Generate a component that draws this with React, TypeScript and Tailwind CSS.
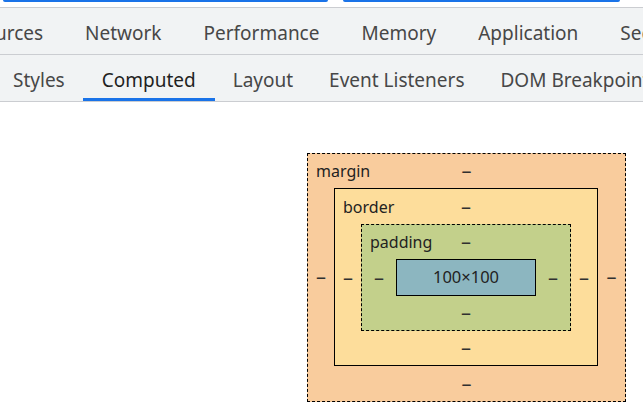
import React from 'react'

const font = { fontFamily: '"Noto Sans", "Open Sans", sans-serif' }

const topTabs = ['Sources', 'Network', 'Performance', 'Memory', 'Application', 'Security']
const subTabs = ['Styles', 'Computed', 'Layout', 'Event Listeners', 'DOM Breakpoints', 'Properties']

const Dash = ({ className = '' }: { className?: string }) => (
  <span className={`text-[20px] leading-none text-[#303030] ${className}`}>–</span>
)

const TopRow = ({ label, h, pl }: { label?: string; h: string; pl: string }) => (
  <div className={`grid grid-cols-[1fr_auto_1fr] items-center ${h}`}>
    <span className={`${pl} text-[16px] leading-none text-[#222]`}>{label}</span>
    <Dash />
    <span />
  </div>
)

const BottomRow = ({ h }: { h: string }) => (
  <div className={`flex items-center justify-center ${h}`}>
    <Dash />
  </div>
)

export default function App() {
  return (
    <div className="w-[643px] h-[418px] overflow-hidden bg-white" style={font}>
      <div className="h-[7px] flex">
        <div className="ml-[3px] w-[325px] h-[2px] rounded-b-full bg-[#1a73e8]" />
        <div className="ml-[15px] w-[277px] h-[2px] rounded-b-full bg-[#1a73e8]" />
      </div>
      <div className="h-[48px] pt-[4px] border-y border-[#cbcdd1] bg-[#f1f3f4] flex items-center whitespace-nowrap overflow-hidden">
        <div className="flex ml-[-48px]">
          {topTabs.map((t) => (
            <div key={t} className="px-[21px] text-[19px] text-[#474747]">{t}</div>
          ))}
        </div>
      </div>
      <div className="h-[47px] border-b border-[#cbcdd1] bg-[#f1f3f4] flex whitespace-nowrap overflow-hidden">
        <div className="flex ml-[-5px]">
          {subTabs.map((t) => (
            <div
              key={t}
              className={`pt-[4px] flex items-center text-[19px] ${
                t === 'Computed'
                  ? 'px-[19px] text-[#1f1f1f] shadow-[inset_0_-3px_0_#1a73e8]'
                  : 'px-[18px] text-[#474747]'
              }`}
            >
              {t}
            </div>
          ))}
        </div>
      </div>

      <div className="pt-[51px] pl-[307px]">
        <div className="w-[319px] border border-dashed border-black bg-[#f9cc9d] flex flex-col">
          <TopRow label="margin" h="h-[34px]" pl="pl-[8px]" />
          <div className="flex items-center">
            <div className="w-[26px] flex justify-center"><Dash /></div>
            <div className="w-[264px] border border-black bg-[#fddd9b] flex flex-col">
              <TopRow label="border" h="h-[35px]" pl="pl-[8px]" />
              <div className="flex items-center">
                <div className="w-[26px] flex justify-center"><Dash /></div>
                <div className="w-[210px] border border-dashed border-black bg-[#c3d08b] flex flex-col">
                  <TopRow label="padding" h="h-[34px]" pl="pl-[8px]" />
                  <div className="flex items-center">
                    <div className="w-[34px] flex justify-center"><Dash /></div>
                    <div className="w-[140px] h-[37px] border border-black bg-[#8cb6c0] flex items-center justify-center text-[16.5px] text-[#222]">
                      100×100
                    </div>
                    <div className="w-[34px] flex justify-center"><Dash /></div>
                  </div>
                  <BottomRow h="h-[34px]" />
                </div>
                <div className="w-[26px] flex justify-center"><Dash /></div>
              </div>
              <BottomRow h="h-[34px]" />
            </div>
            <div className="w-[27px] flex justify-center"><Dash /></div>
          </div>
          <BottomRow h="h-[35px]" />
        </div>
      </div>
    </div>
  )
}
